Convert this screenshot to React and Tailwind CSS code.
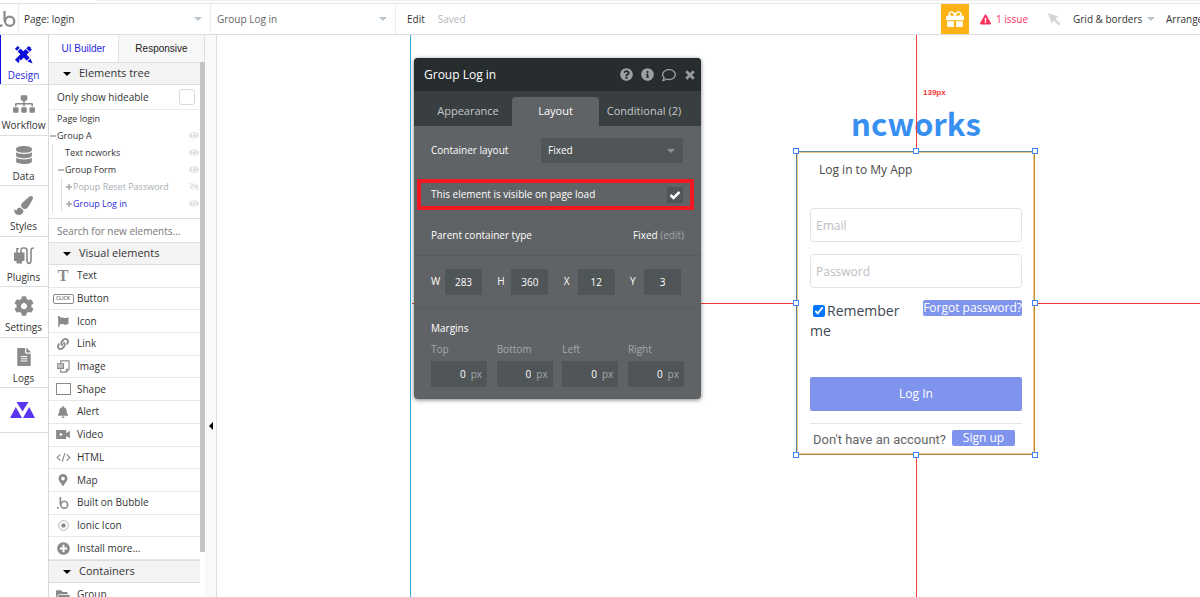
import React, { useState } from "react";
import {
  FaBell,
  FaCog,
  FaDatabase,
  FaExclamationTriangle,
  FaEye,
  FaEyeSlash,
  FaFileAlt,
  FaFlag,
  FaFolderOpen,
  FaGift,
  FaInfoCircle,
  FaLink,
  FaMapMarkerAlt,
  FaPaintBrush,
  FaPlusCircle,
  FaQuestionCircle,
  FaRegComment,
  FaSitemap,
  FaTimes,
} from "react-icons/fa";

const BubbleLogo = ({ className }) => (
  <svg viewBox="0 0 16 16" className={className} fill="none" stroke="currentColor" strokeWidth="2.2">
    <path d="M4.500 0v10.300" />
    <circle cx="9.700" cy="10.300" r="4.600" />
    <circle cx="1.200" cy="14.600" r="1.400" fill="currentColor" stroke="none" />
  </svg>
);

const DesignIcon = () => (
  <svg viewBox="0 0 20 20" className="h-[19px] w-[19px]" fill="currentColor">
    <path d="M1 4 4 1l2 2-3 3z" />
    <path d="M3.800 6.800 6.800 3.800 16.500 13.500 13.500 16.500z" />
    <path d="M14.300 17.300l3-3L19.500 19.500z" />
    <path d="M13 3.500 15.500 1 16.500 2 18 2.500 17.500 4 19 4.500 16.500 7z" />
    <path d="M12.300 4.200 15.800 7.700 7.200 16.300 6 15 5 16l1 1.200L4.500 19 1 15.500z" />
  </svg>
);

const PlugIcon = () => (
  <svg viewBox="0 0 20 18" className="h-[18px] w-5" fill="currentColor">
    <path d="M0 5.500h10.500V14H8v2.500H2.500V14H0z" />
    <path d="M3 6V1.800h2M7 6V3c0-1.300.500-2 2-2h1.500c1.500 0 2.500 1 2.500 2.500V13c0 4.500 4 4.500 4 0V3.500C17 2 17.500 1 19.800 1" fill="none" stroke="currentColor" strokeWidth="1.600" />
  </svg>
);

const TrianglesIcon = () => (
  <svg viewBox="0 0 25 16" className="h-4 w-[25px]" fill="#5b35ef">
    <path d="M6.500 0h12l-6 9.500z" />
    <path d="M5.800 5 12 16H0zM19.200 5 25 16H13z" />
  </svg>
);

const ImageIcon = () => (
  <svg viewBox="0 0 14 14" className="h-[13px] w-[13px]" fill="none" stroke="currentColor" strokeWidth="1.200">
    <path d="M4 4V1h9v9l-3 3H4v-3M13 10h-3v3" />
    <path d="M0 4h7v5H0z" fill="currentColor" fillOpacity=".5" />
  </svg>
);

const CodeIcon = () => (
  <svg viewBox="0 0 16 10" className="h-[9px] w-[15px]" fill="none" stroke="currentColor" strokeWidth="1.200">
    <path d="M4.500 1.500 1 5l3.500 3.500M11.500 1.500 15 5l-3.500 3.500M9.500 0l-3 10" />
  </svg>
);

const VideoIcon = () => (
  <svg viewBox="0 0 15 12" className="h-[11px] w-[14px]" fill="currentColor">
    <path d="M0 1h11v3.500L15 2v8l-4-2.500V11H0z" />
    <path d="M4 4v4l3.500-2z" fill="#fff" />
  </svg>
);

const IonicIcon = () => (
  <svg viewBox="0 0 12 12" className="h-[11px] w-[11px]" fill="none" stroke="currentColor">
    <circle cx="6" cy="6" r="5.300" strokeWidth=".7" />
    <circle cx="6" cy="6" r="2" fill="currentColor" />
  </svg>
);

const CursorIcon = () => (
  <svg viewBox="0 0 14 14" className="h-[13px] w-[13px]" fill="#d4d4d4">
    <path d="M0 0l11.500 4-3.500 2.200 5.500 5.300-2 2L6.200 8 4 11.500z" />
  </svg>
);

const Caret = ({ className = "" }) => (
  <svg viewBox="0 0 8 4" className={`h-1 w-2 shrink-0 ${className}`} fill="currentColor">
    <path d="M0 0h8L4 4z" />
  </svg>
);

const navItems = [
  { label: "Design", icon: <DesignIcon />, active: true },
  { label: "Workflow", icon: <FaSitemap className="h-[22px] w-[22px]" /> },
  { label: "Data", icon: <FaDatabase className="h-[18px] w-4" /> },
  { label: "Styles", icon: <FaPaintBrush className="h-[19px] w-[19px]" /> },
  { label: "Plugins", icon: <PlugIcon /> },
  { label: "Settings", icon: <FaCog className="h-5 w-5" /> },
  { label: "Logs", icon: <FaFileAlt className="h-[18px] w-4" /> },
];

const visualElements = [
  { label: "Text", icon: <span className="font-['Liberation_Serif'] text-base font-bold">T</span> },
  {
    label: "Button",
    icon: (
      <span className="flex h-[10px] w-[21px] items-center justify-center rounded-xs border border-[#8a8a8a] text-[5px] font-bold">
        CLICK
      </span>
    ),
  },
  { label: "Icon", icon: <FaFlag className="h-[11px] w-3" /> },
  { label: "Link", icon: <FaLink className="h-3 w-3" /> },
  { label: "Image", icon: <ImageIcon /> },
  { label: "Shape", icon: <span className="h-3 w-[15px] border border-[#8a8a8a]" /> },
  { label: "Alert", icon: <FaBell className="h-3 w-3" /> },
  { label: "Video", icon: <VideoIcon /> },
  { label: "HTML", icon: <CodeIcon /> },
  { label: "Map", icon: <FaMapMarkerAlt className="h-3 w-3" /> },
  { label: "Built on Bubble", icon: <BubbleLogo className="h-3 w-3" /> },
  { label: "Ionic Icon", icon: <IonicIcon /> },
  { label: "Install more...", icon: <FaPlusCircle className="h-[13px] w-[13px]" /> },
];

const TopBar = () => (
  <header className="shrink-0 bg-white">
    <div className="h-1 border-b border-[#e4e4e4]">
      <div className="ml-[97px] h-px bg-[#f0f0f0]" />
    </div>
    <div className="flex h-[31px] items-stretch border-b border-[#dedede]">
      <a href="#home" aria-label="Home" className="flex w-[19px] shrink-0 items-center border-r border-[#ececec] text-[#8a8a8a]">
        <BubbleLogo className="h-4 w-4" />
      </a>
      <div className="relative flex w-48 shrink-0 items-center border-r border-[#ececec]">
        <select aria-label="Page" className="w-full appearance-none pl-[5px] text-[#333] outline-none">
          <option>Page: login</option>
        </select>
        <Caret className="pointer-events-none absolute right-2 text-[#b9c3cc]" />
      </div>
      <div className="relative flex w-[185px] shrink-0 items-center border-r border-[#ececec]">
        <select aria-label="Element" className="w-full appearance-none pl-[6px] text-[#666] outline-none">
          <option>Group Log in</option>
        </select>
        <Caret className="pointer-events-none absolute right-2 text-[#b9c3cc]" />
      </div>
      <button className="ml-[11px] text-[#333]">Edit</button>
      <span className="ml-[13px] flex items-center text-[#b5b5b5]">Saved</span>
      <div className="ml-auto flex shrink-0 items-center">
        <button aria-label="Gifts" className="flex w-7 items-center justify-center self-stretch bg-[#fdb315] text-white">
          <FaGift className="h-[18px] w-[18px]" />
        </button>
        <button className="ml-[11px] flex w-[68px] items-center gap-[5px] text-[#fa2f5b]">
          <FaExclamationTriangle className="h-[11px] w-[11px]" />1 issue
        </button>
        <CursorIcon />
        <button className="ml-3 flex w-[93px] items-center gap-[5px] whitespace-nowrap text-[#333]">
          Grid &amp; borders
          <Caret className="text-[#b9c3cc]" />
        </button>
        <button className="w-[34px] text-left whitespace-nowrap text-[#333]">Arrange</button>
      </div>
    </div>
  </header>
);

const NavRail = () => (
  <nav className="w-[49px] shrink-0 border-r border-[#d9d9d9] bg-white text-[#8a8a8a]">
    <div className="grid h-[353px] grid-rows-7">
      {navItems.map((item) => (
        <a
          key={item.label}
          href={`#${item.label}`}
          className={`flex flex-col items-center gap-[2px] border-b border-[#dedede] pt-2 pr-px ${
            item.active ? "text-[#0c0cd8] shadow-[inset_1px_0_0_#1515e0]" : ""
          }`}
        >
          <span className="flex h-[22px] items-center">{item.icon}</span>
          <span className={`leading-4 ${item.active ? "text-[#2a2ae0]" : "text-[#333]"}`}>{item.label}</span>
        </a>
      ))}
    </div>
    <a href="#apps" aria-label="Apps" className="flex h-[45px] items-center justify-center border-b border-[#dedede] pr-1">
      <TrianglesIcon />
    </a>
  </nav>
);

const SectionHeader = ({ title }) => (
  <button className="flex h-[23px] w-full shrink-0 items-center gap-2 border-y border-[#dedede] bg-[#f3f3f3] pl-[14px] text-[11px] text-[#333]">
    <Caret className="text-black" />
    {title}
  </button>
);

const Sign = ({ sign }) => (
  <svg viewBox="0 0 8 8" className="h-2 w-2 shrink-0" fill="none" stroke="#a5a5a5" strokeWidth="1.500">
    {sign && <path d="M1 4h6" />}
    {sign === "+" && <path d="M4 1v6" />}
  </svg>
);

const TreeRow = ({ label, sign, indent = "", color = "text-[#333]", hidden, noEye }) => (
  <li className={`flex h-[17px] items-center ${indent} ${color}`}>
    <Sign sign={sign} />
    <span className="flex-1 whitespace-nowrap">{label}</span>
    {!noEye &&
      (hidden ? (
        <FaEyeSlash className="mr-px h-[9px] w-[10px] text-[#dcdcdc]" />
      ) : (
        <FaEye className="mr-px h-[9px] w-[10px] text-[#dcdcdc]" />
      ))}
  </li>
);

const ElementsPanel = () => {
  const [hideable, setHideable] = useState(false);

  return (
    <aside className="flex w-[156px] shrink-0 flex-col overflow-hidden bg-white">
      <div className="flex h-[27px] shrink-0 border-r border-[#dedede] font-['Liberation_Sans']">
        <button className="w-[69px] text-[#2a2ae0]">UI Builder</button>
        <button className="flex-1 border-l border-[#e4e4e4] bg-[#f7f7f7] text-[#222]">Responsive</button>
      </div>
      <div className="flex min-h-0 flex-1">
        <div className="min-w-0 flex-1">
          <SectionHeader title="Elements tree" />
          <label className="flex h-[25px] items-center justify-between border-b border-[#ececec] pr-[5px] pl-2 text-[#333]">
            Only show hideable
            <input
              type="checkbox"
              checked={hideable}
              onChange={(e) => setHideable(e.target.checked)}
              className="h-4 w-4 appearance-none rounded-[3px] border border-[#d9d9d9] checked:bg-[#2a2ae0]"
            />
          </label>
          <ul className="h-[109px] border-b border-[#dedede] text-[9px]">
            <TreeRow label="Page login" noEye />
            <TreeRow label="Group A" sign="-" />
            <li className="ml-[3px] border-l border-[#e0e0e0]">
              <ul>
                <TreeRow label="Text ncworks" indent="pl-1" />
                <TreeRow label="Group Form" sign="-" indent="pl-1" />
                <li className="ml-2 border-l border-[#e0e0e0]">
                  <ul>
                    <TreeRow label="Popup Reset Password" sign="+" indent="pl-[3px]" color="text-[#a8adb2]" hidden />
                    <TreeRow label="Group Log in" sign="+" indent="pl-[3px]" color="text-[#2a2ae0]" />
                  </ul>
                </li>
              </ul>
            </li>
          </ul>
          <input
            type="search"
            aria-label="Search for new elements"
            placeholder="Search for new elements..."
            className="block h-[23px] w-full pl-2 outline-none placeholder:text-[#777]"
          />
          <SectionHeader title="Visual elements" />
          <ul className="grid h-[295px] grid-rows-13">
            {visualElements.map((el) => (
              <li key={el.label} className="flex items-center border-b border-[#e8e8e8] text-[#333]">
                <span className="flex w-7 items-center justify-center text-[#8a8a8a]">{el.icon}</span>
                {el.label}
              </li>
            ))}
          </ul>
          <SectionHeader title="Containers" />
          <div className="flex h-[23px] items-center text-[#333]">
            <span className="flex w-7 justify-center text-[#8a8a8a]">
              <FaFolderOpen className="h-[14px] w-[14px]" />
            </span>
            Group
          </div>
        </div>
        <div className="w-[5px] shrink-0">
          <div className="h-[490px] bg-[#c4c4c4]" />
        </div>
      </div>
    </aside>
  );
};

const Margin = ({ label }) => (
  <label className="flex flex-col text-[#a4a8ab]">
    <span className="leading-4">{label}</span>
    <span className="mt-1 flex h-[26px] w-14 items-center bg-[#505557] pr-[5px]">
      <input defaultValue="0" className="w-full min-w-0 pr-[5px] text-right text-white outline-none" />
      px
    </span>
  </label>
);

const Dimension = ({ label, value }) => (
  <label className="flex items-center justify-between text-white">
    {label}
    <input defaultValue={value} className="h-[26px] w-[37px] bg-[#505557] text-center outline-none" />
  </label>
);

const PropertyEditor = () => {
  const [visible, setVisible] = useState(true);

  return (
    <section className="absolute top-[23px] left-[197px] w-[287px] overflow-hidden rounded-[4px] bg-[#5f6366] text-white shadow-[0_1px_4px_rgba(0,0,0,0.5)]">
      <div className="flex h-[33px] items-center bg-[#272d2f] pr-[5px] pl-[10px]">
        <h2 className="flex-1 text-xs">Group Log in</h2>
        <div className="flex items-center gap-2 text-[#9aa0a3]">
          <button aria-label="Help"><FaQuestionCircle className="h-[13px] w-[13px]" /></button>
          <button aria-label="Info"><FaInfoCircle className="h-[13px] w-[13px]" /></button>
          <button aria-label="Comment"><FaRegComment className="h-[14px] w-[14px]" /></button>
          <button aria-label="Close"><FaTimes className="h-3 w-3" stroke="currentColor" strokeWidth="30" /></button>
        </div>
      </div>
      <div className="flex h-[35px] items-end bg-[#393e40] text-[11px] text-[#c4c8ca]">
        <button className="h-[29px] flex-1 pl-[10px]">Appearance</button>
        <button className="h-[29px] w-[87px] rounded-t-[4px] bg-[#5f6366] text-white">Layout</button>
        <button className="h-[29px] w-[102px] pr-3 whitespace-nowrap">Conditional (2)</button>
      </div>
      <label className="flex h-[50px] items-center justify-between border-b border-[#5a5f62] pr-[18px] pl-[17px]">
        Container layout
        <span className="relative flex h-[25px] w-[142px] items-center bg-[#505557]">
          <select className="w-full appearance-none pl-[7px] outline-none">
            <option>Fixed</option>
          </select>
          <Caret className="pointer-events-none absolute right-2 text-[#8d9295]" />
        </span>
      </label>
      <div className="h-10 border-b border-[#5a5f62] pt-[3px] pr-[7px] pl-[3px]">
        <label className="flex h-[31px] items-center justify-between border-4 border-[#f01822] pr-[7px] pl-[10px]">
          This element is visible on page load
          <span className="relative flex">
            <input
              type="checkbox"
              checked={visible}
              onChange={(e) => setVisible(e.target.checked)}
              className="h-4 w-4 appearance-none bg-[#505557]"
            />
            {visible && (
              <svg viewBox="0 0 16 16" className="pointer-events-none absolute inset-0" fill="none" stroke="#fff" strokeWidth="2.500">
                <path d="M3.500 8 6.500 11 12.500 5" />
              </svg>
            )}
          </span>
        </label>
      </div>
      <div className="flex h-10 items-center justify-between border-b border-[#565b5e] px-[17px]">
        Parent container type
        <span>
          Fixed <a href="#edit" className="text-[#a4a8ab]">(edit)</a>
        </span>
      </div>
      <div className="grid h-[52px] grid-cols-[51px_51px_51px_51px] items-center justify-between border-b border-[#565b5e] pr-5 pl-[17px]">
        <Dimension label="W" value="283" />
        <Dimension label="H" value="360" />
        <Dimension label="X" value="12" />
        <Dimension label="Y" value="3" />
      </div>
      <div className="px-[17px] py-3">
        <h3 className="leading-4">Margins</h3>
        <div className="mt-[5px] flex justify-between">
          <Margin label="Top" />
          <Margin label="Bottom" />
          <Margin label="Left" />
          <Margin label="Right" />
        </div>
      </div>
    </section>
  );
};

const handles = [
  "-top-[3px] -left-[3px]",
  "-top-[3px] left-[117px]",
  "-top-[3px] -right-[3px]",
  "top-[149px] -left-[3px]",
  "top-[149px] -right-[3px]",
  "-bottom-[3px] -left-[3px]",
  "-bottom-[3px] left-[117px]",
  "-bottom-[3px] -right-[3px]",
];

const LoginGroup = () => (
  <div className="absolute top-[116px] left-[579px] h-[304px] w-[239px]">
    <form className="flex h-full flex-col border border-[#5f8396] border-r-[#c98a2b] border-b-[#a3834f] pr-3 pl-[13px] text-xs text-[#4a4a4a] shadow-[inset_0_0_0_1px_#f0c88f]">
      <h2 className="mt-2 pl-[9px] leading-5">Log in to My App</h2>
      <input type="email" aria-label="Email" placeholder="Email" className="mt-7 h-[34px] shrink-0 rounded-[4px] border border-[#e2e2e8] px-[5px] outline-none placeholder:text-[#bdbdc4]" />
      <input type="password" aria-label="Password" placeholder="Password" className="mt-3 h-[34px] shrink-0 rounded-[4px] border border-[#e2e2e8] px-[5px] outline-none placeholder:text-[#bdbdc4]" />
      <div className="mt-3 flex items-start justify-between">
        <label className="w-24 pt-px text-sm leading-5 text-[#3d4852]">
          <input type="checkbox" defaultChecked className="mr-[2px] ml-[3px] h-3 w-3 align-[-1px] accent-[#0075ff]" />
          Remember me
        </label>
        <button type="button" className="flex h-4 items-center justify-center rounded-xs bg-[#7f94ec] whitespace-nowrap text-white">
          Forgot password?
        </button>
      </div>
      <button type="button" className="mt-9 h-[34px] shrink-0 rounded-xs bg-[#7f94ec] text-white">Log In</button>
      <div className="mt-3 flex items-start gap-[6px] border-t border-[#e6e6e6] pt-[6px] pl-[3px]">
        <span className="font-[Roboto] text-[13px] leading-5 whitespace-nowrap text-[#666]">Don't have an account?</span>
        <button type="button" className="flex h-4 w-[63px] items-center justify-center rounded-xs bg-[#7f94ec] text-white">
          Sign up
        </button>
      </div>
    </form>
    {handles.map((pos) => (
      <span key={pos} className={`absolute h-[6px] w-[6px] border border-[#3d86f5] bg-white ${pos}`} />
    ))}
  </div>
);

const Canvas = () => (
  <main className="relative min-w-0 flex-1 overflow-hidden bg-white">
    <div className="absolute inset-y-0 left-[193px] w-px bg-[#2fa9d6]" />
    <div className="absolute top-[268px] left-[195px] h-px w-[384px] bg-[#f53b3b]" />
    <div className="absolute top-[268px] right-0 left-[818px] h-px bg-[#f53b3b]" />
    <h1 className="absolute top-[63px] left-[579px] w-[240px] text-center font-['Noto_Sans_CJK_SC',sans-serif] text-[31px] leading-[50px] font-bold text-[#378ff0]">
      ncworks
    </h1>
    <div className="absolute top-0 left-[699px] h-[116px] w-px bg-[#f53b3b]" />
    <div className="absolute top-[421px] bottom-0 left-[699px] w-px bg-[#f53b3b]" />
    <span className="absolute top-[52px] left-[706px] font-['Liberation_Sans'] text-[8px] leading-3 font-bold text-[#f53b3b]">139px</span>
    <LoginGroup />
    <PropertyEditor />
  </main>
);

const App = () => (
  <div className="flex h-screen flex-col overflow-hidden bg-white font-['Open_Sans',sans-serif] text-[10px]">
    <TopBar />
    <div className="flex min-h-0 flex-1">
      <NavRail />
      <ElementsPanel />
      <button aria-label="Collapse panel" className="flex w-3 shrink-0 justify-center border-r border-[#dedede] bg-[#f9f9f9] pt-[387px]">
        <svg viewBox="0 0 4 8" className="h-2 w-1" fill="#000">
          <path d="M4 0v8L0 4z" />
        </svg>
      </button>
      <Canvas />
    </div>
  </div>
);

export default App;
